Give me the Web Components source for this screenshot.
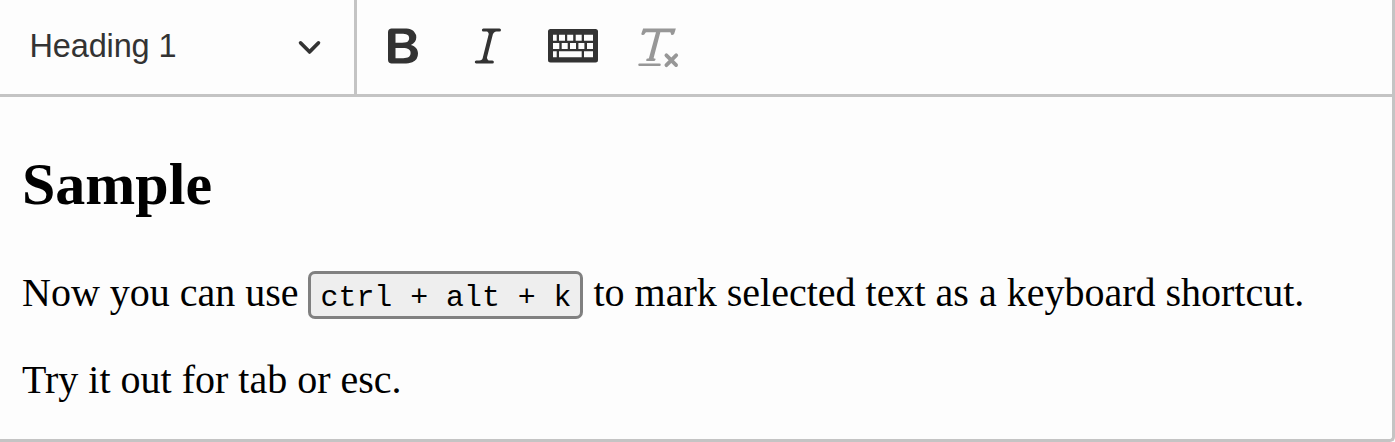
<!DOCTYPE html>
<html lang="en">
<head>
<meta charset="utf-8">
<title>Editor</title>
<style>html,body{margin:0;background:#fdfdfd}</style>
</head>
<body>
<rich-editor>
  <editor-toolbar slot="toolbar">
    <heading-dropdown>Heading 1</heading-dropdown>
    <tool-button icon="bold"></tool-button>
    <tool-button icon="italic"></tool-button>
    <tool-button icon="keyboard"></tool-button>
    <tool-button icon="remove" disabled></tool-button>
  </editor-toolbar>
  <doc-heading>Sample</doc-heading>
  <doc-paragraph>Now you can use <key-cap>ctrl + alt + k</key-cap> to mark selected text as a keyboard shortcut.</doc-paragraph>
  <doc-paragraph>Try it out for tab or esc.</doc-paragraph>
</rich-editor>
<script>
const define = (name, html) => customElements.define(name, class extends HTMLElement {
  constructor() {
    super();
    this.attachShadow({mode: 'open'}).innerHTML = typeof html === 'function' ? html(this) : html;
  }
});

define('rich-editor', `<style>
:host{display:flex;flex-direction:column;box-sizing:border-box;width:1395px;height:442px;border:solid #c4c4c4;border-width:0 3px 3px 0;border-bottom-right-radius:5px;background:#fdfdfd;overflow:hidden}
main{padding:54px 0 0 22px;color:#000;font-family:"Liberation Serif",serif}
</style><slot name="toolbar"></slot><main><slot></slot></main>`);

define('editor-toolbar', `<style>
:host{display:flex;flex:none;height:94px;border-bottom:3px solid #c4c4c4;color:#333}
</style><slot></slot>`);

define('heading-dropdown', `<style>
:host{display:flex;box-sizing:border-box;width:357px;padding:0 32px 2px 29.500px;margin-right:4px;border-right:3px solid #c4c4c4;align-items:center;justify-content:space-between;font:32.5px/40px "Liberation Sans",Arial,sans-serif;letter-spacing:-.15px}
svg{width:25px;height:25px;margin-bottom:2px;fill:currentColor}
</style><span><slot></slot></span><svg viewBox="0 0 10 10"><path d="M.941 4.523a.75.75 0 1 1 1.06-1.06l3.006 3.005 3.005-3.005a.75.75 0 1 1 1.06 1.06l-3.549 3.55a.75.75 0 0 1-1.168-.136L.941 4.523z"/></svg>`);

const icons = {
  bold: '<path d="M10.187 17H5.773c-.637 0-1.092-.138-1.364-.415-.273-.277-.409-.718-.409-1.323V4.738c0-.617.14-1.062.419-1.332.279-.27.73-.406 1.354-.406h4.68c.69 0 1.288.041 1.793.124.506.083.96.242 1.36.478.341.197.644.447.906.75a3.262 3.262 0 0 1 .808 2.162c0 1.401-.722 2.426-2.167 3.075C15.05 10.175 16 11.315 16 13.01a3.756 3.756 0 0 1-2.296 3.504 6.1 6.1 0 0 1-1.517.377c-.571.073-1.238.11-2 .11zm-.217-6.217H7v4.087h3.069c1.977 0 2.965-.69 2.965-2.072 0-.707-.256-1.22-.768-1.537-.512-.319-1.277-.478-2.296-.478zM7 5.13v3.619h2.606c.729 0 1.292-.067 1.69-.2a1.6 1.6 0 0 0 .91-.765c.165-.267.247-.566.247-.897 0-.707-.26-1.176-.778-1.409-.519-.232-1.31-.348-2.375-.348H7z"/>',
  italic: '<path d="m9.586 14.633.021.004c-.036.335.095.655.393.962.082.083.173.15.274.201h1.474a.6.6 0 1 1 0 1.2H5.304a.6.6 0 0 1 0-1.2h1.15c.474-.07.809-.182 1.005-.334.157-.122.291-.32.404-.597l2.416-9.55a1.053 1.053 0 0 0-.281-.823 1.12 1.12 0 0 0-.442-.296H8.15a.6.6 0 0 1 0-1.2h6.443a.6.6 0 1 1 0 1.2h-1.195c-.376.056-.65.155-.823.296-.215.175-.423.439-.623.79l-2.366 9.347z"/>',
  keyboard: '<path transform="scale(.4)" fill-rule="evenodd" d="M2.5 8h45a2.5 2.5 0 0 1 2.500 2.500v28.500a2.500 2.500 0 0 1-2.500 2.500h-45a2.500 2.500 0 0 1-2.500-2.500v-28.500a2.500 2.500 0 0 1 2.500-2.500zM5 13.700h3.700v6h-3.700zM11 13.700h6v6h-6zM19.200 13.700h6v6h-6zM27.700 13.700h6v6h-6zM36 13.700h9v6h-9zM5 22h6.300v6h-6.300zM13.700 22h6v6h-6zM22 22h6v6h-6zM30.400 22h6v6h-6zM39 22h6v6h-6zM5 30.300h3.700v6h-3.700zM11 30.300h22.700v6h-22.700zM36 30.300h9v6h-9z"/>',
  remove: '<path d="M8.69 14.915c.053.052.173.083.36.093a.366.366 0 0 1 .345.485l-.003.01a.738.738 0 0 1-.697.497h-2.67a.374.374 0 0 1-.353-.496l.013-.038a.681.681 0 0 1 .644-.458c.197-.012.325-.043.386-.093a.28.28 0 0 0 .072-.11L9.592 4.5H6.269c-.359-.017-.609.013-.75.09-.142.078-.289.265-.442.563-.192.29-.516.464-.864.464H4.17a.43.43 0 0 1-.407-.569L4.46 3h13.08l-.62 2.043a.81.81 0 0 1-.775.574h-.114a.486.486 0 0 1-.486-.486c.001-.284-.054-.464-.167-.54-.112-.076-.367-.106-.766-.091h-3.28l-2.68 10.257c-.006.074.007.127.038.158zM3 17h8a.5.5 0 1 1 0 1H3a.5.5 0 1 1 0-1zm11.299 1.17a.75.75 0 1 1-1.06-1.06l1.414-1.415-1.415-1.414a.75.75 0 1 1 1.06-1.06l1.415 1.414 1.414-1.415a.75.75 0 1 1 1.06 1.06l-1.413 1.415 1.414 1.415a.75.75 0 0 1-1.06 1.06l-1.415-1.414-1.414 1.414z"/>'
};
define('tool-button', el => `<style>
:host{display:flex;width:84.700px;justify-content:center;padding-top:21px}
:host([disabled]) svg{opacity:.5}
svg{width:50px;height:50px;fill:currentColor}
</style><svg viewBox="0 0 20 20">${icons[el.getAttribute('icon')]}</svg>`);

define('doc-heading', `<style>
:host{display:block;margin-bottom:52px}
h1{margin:0;font-size:60px;line-height:66px;font-weight:700}
</style><h1><slot></slot></h1>`);

define('doc-paragraph', `<style>
:host{display:block;margin-bottom:40px}
p{margin:0;font-size:40px;line-height:47px;white-space:nowrap}
</style><p><slot></slot></p>`);

define('key-cap', `<style>
:host{display:inline}
kbd{font:29.860px/0 "Liberation Mono",monospace;margin-left:-.6px;padding:7px 9px 1px 9.600px;border:3px solid #808080;border-radius:7px;background:#eee}
</style><kbd><slot></slot></kbd>`);
</script>
</body>
</html>
